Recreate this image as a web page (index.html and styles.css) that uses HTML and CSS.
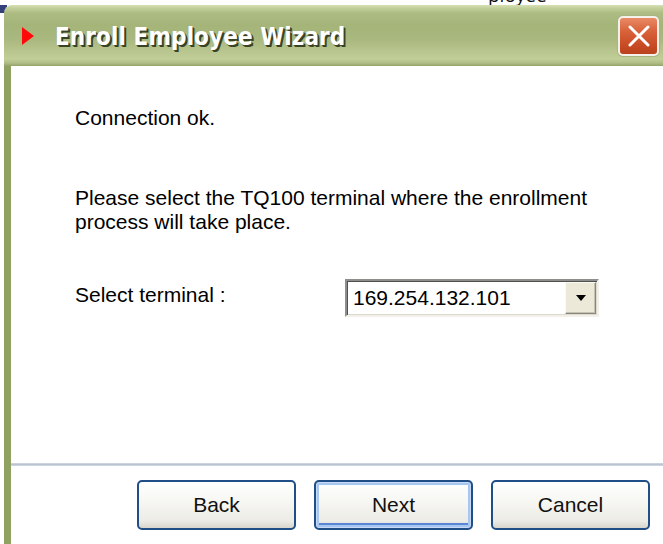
FILE: index.html
```html
<!DOCTYPE html>
<html lang="en">
<head>
<meta charset="utf-8">
<title>Enroll Employee Wizard</title>
<link rel="stylesheet" href="styles.css">
</head>
<body>
<div class="doc-strip"><span class="doc-text">ployee</span></div>
<div class="window">
  <div class="titlebar">
    <svg class="title-mark" width="12" height="18" viewBox="0 0 12 18" aria-hidden="true"><polygon points="0,0 12,9 0,18" fill="#ff0a0a"/></svg>
    <span class="title-text">Enroll Employee Wizard</span>
    <button class="close-btn" aria-label="Close">
      <svg width="22" height="22" viewBox="0 0 22 22" aria-hidden="true"><path d="M2 2 L20 20 M20 2 L2 20" stroke="#fff" stroke-width="3" stroke-linecap="round"/></svg>
    </button>
  </div>
  <div class="client">
    <div class="page">
      <p class="msg msg-status">Connection ok.</p>
      <p class="msg msg-prompt">Please select the TQ100 terminal where the enrollment<br>process will take place.</p>
      <div class="field-row">
        <span class="field-label">Select terminal :</span>
        <div class="combo">
          <span class="combo-value">169.254.132.101</span>
          <span class="combo-btn"><svg width="10" height="6" viewBox="0 0 10 6" aria-hidden="true"><polygon points="0,0 10,0 5,6" fill="#000"/></svg></span>
        </div>
      </div>
    </div>
    <div class="separator"></div>
    <div class="actions">
      <button class="btn">Back</button>
      <button class="btn btn-default">Next</button>
      <button class="btn">Cancel</button>
    </div>
  </div>
</div>
</body>
</html>
```

FILE: styles.css
```css
* { box-sizing: border-box; }

html, body {
  margin: 0;
  width: 663px;
  height: 544px;
  overflow: hidden;
  background: #fff;
}

body {
  font-family: "Liberation Sans", Arial, sans-serif;
  /* desktop colour peeking behind the rounded window corner */
  background: #fff linear-gradient(#33407a, #33407a) no-repeat 0 5px / 7px 8px;
}

.doc-strip {
  height: 5px;
  overflow: hidden;
  position: relative;
}

.doc-text {
  position: absolute;
  left: 488px;
  top: -18px;
  font: 19px "Open Sans", "Liberation Sans", sans-serif;
  color: #111;
}

.window {
  margin-left: 4px;
  height: 539px;
  display: flex;
  flex-direction: column;
}

.titlebar {
  height: 61px;
  flex: none;
  display: flex;
  align-items: center;
  padding-left: 18px;
  border-radius: 8px 0 0 0;
  background: linear-gradient(to bottom,
    #d6e0b4 0px, #c3d09c 3px, #adbc82 8px, #a5b479 20px,
    #a9b87e 34px, #b8c58e 46px, #c2ce98 54px, #b0bd86 58px, #94a36a 61px);
}

.title-mark { flex: none; }

.title-text {
  margin-left: 21px;
  margin-top: 2px;
  font-family: "DejaVu Sans Condensed", "DejaVu Sans", sans-serif;
  font-weight: bold;
  font-size: 24px;
  color: #fff;
  letter-spacing: 0.1px;
  text-shadow: 2px 2px 0 #3a4226, 1px 1px 0 #5a6440;
}

.close-btn {
  margin-left: auto;
  margin-right: 4px;
  width: 41px;
  height: 40px;
  padding: 0;
  display: flex;
  align-items: center;
  justify-content: center;
  border: 2px solid #f4f0ea;
  border-radius: 5px;
  background: linear-gradient(to bottom, #e98a66 0%, #d9643c 35%, #c94b24 75%, #b9421e 100%);
  box-shadow: 0 0 0 1px #a8b482;
}

.client {
  flex: 1;
  display: flex;
  flex-direction: column;
  background: #fff;
  border-left: 7px solid #a0b274;
  border-image: linear-gradient(to right, #8fa262, #b7c790 40%, #9db070 70%, #dfe6c8) 1;
}

.page {
  flex: 1;
  padding: 40px 0 0 64px;
  color: #000;
  font-size: 21px;
  line-height: 24px;
}

.msg { margin: 0; }

.msg-prompt { margin-top: 56px; }

.field-row {
  margin-top: 45px;
  display: flex;
  align-items: flex-start;
}

.field-label {
  width: 270px;
  flex: none;
  padding-top: 4px;
}

.combo {
  width: 254px;
  height: 38px;
  display: flex;
  align-items: center;
  background: #fff;
  border: 2px solid;
  border-color: #8e8e8a #f2f0e8 #f2f0e8 #8e8e8a;
  box-shadow: inset 1px 1px 0 #505050, inset -1px -1px 0 #dcdad0;
}

.combo-value {
  flex: 1;
  padding-left: 6px;
}

.combo-btn {
  width: 31px;
  height: 32px;
  margin-right: 1px;
  display: flex;
  align-items: center;
  justify-content: center;
  background: #ece9d8;
  border: 1px solid;
  border-color: #fbfaf5 #8a887c #8a887c #fbfaf5;
  box-shadow: inset -1px -1px 0 #c5c2b2;
}

.separator {
  height: 3px;
  background: linear-gradient(#d3dae2, #b9c4d0 50%, #d8dee6);
}

.actions {
  height: 78px;
  flex: none;
  display: flex;
  justify-content: flex-end;
  gap: 18px;
  padding: 14px 13px 0 0;
}

.btn {
  width: 159px;
  height: 50px;
  padding: 0;
  font-family: "Liberation Sans", Arial, sans-serif;
  font-size: 21px;
  color: #111;
  border: 2px solid #1f4f86;
  border-radius: 5px;
  background: linear-gradient(to bottom, #ffffff 0%, #f6f6f2 45%, #ecebe5 85%, #d8d6cc 100%);
}

.btn-default {
  box-shadow: inset 0 0 0 1px #c6daf6, inset 0 0 0 3px #a8c6f2, inset 0 -3px 0 2px #5a86d6;
}
```
